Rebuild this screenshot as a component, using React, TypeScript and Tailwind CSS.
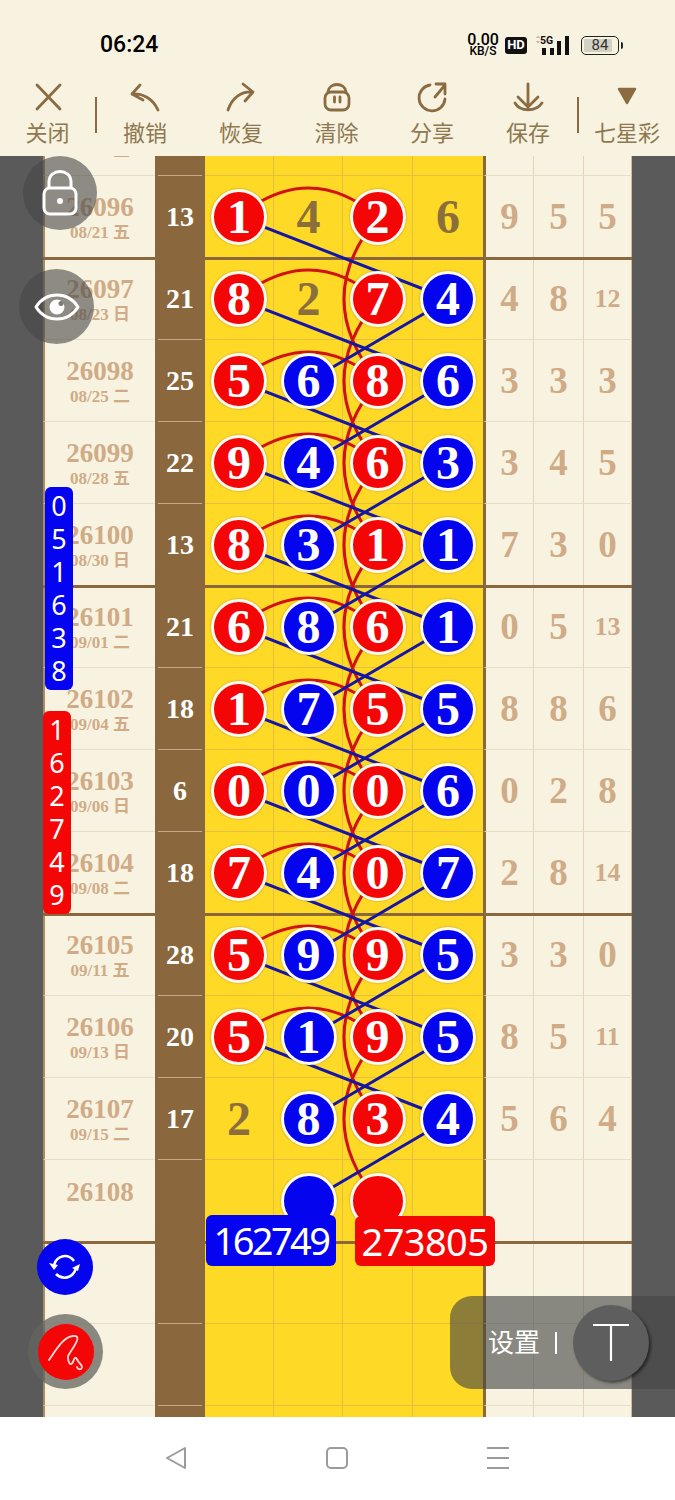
import type { ReactNode } from "react";

const serif = "font-['Liberation_Serif','Noto_Sans_CJK_SC',serif]";
const sans = "font-['Noto_Sans','Noto_Sans_CJK_SC',sans-serif]";

type Ball = { n?: number; c?: "r" | "b" };

interface RowData {
	issue?: string;
	date?: string;
	sum?: number;
	balls?: (Ball | null)[];
	right?: number[];
}

const r = (n?: number): Ball => ({ n, c: "r" });
const b = (n?: number): Ball => ({ n, c: "b" });
const p = (n: number): Ball => ({ n });

const rows: RowData[] = [
	{ issue: "26095", date: "08/19 三" },
	{ issue: "26096", date: "08/21 五", sum: 13, balls: [r(1), p(4), r(2), p(6)], right: [9, 5, 5] },
	{ issue: "26097", date: "08/23 日", sum: 21, balls: [r(8), p(2), r(7), b(4)], right: [4, 8, 12] },
	{ issue: "26098", date: "08/25 二", sum: 25, balls: [r(5), b(6), r(8), b(6)], right: [3, 3, 3] },
	{ issue: "26099", date: "08/28 五", sum: 22, balls: [r(9), b(4), r(6), b(3)], right: [3, 4, 5] },
	{ issue: "26100", date: "08/30 日", sum: 13, balls: [r(8), b(3), r(1), b(1)], right: [7, 3, 0] },
	{ issue: "26101", date: "09/01 二", sum: 21, balls: [r(6), b(8), r(6), b(1)], right: [0, 5, 13] },
	{ issue: "26102", date: "09/04 五", sum: 18, balls: [r(1), b(7), r(5), b(5)], right: [8, 8, 6] },
	{ issue: "26103", date: "09/06 日", sum: 6, balls: [r(0), b(0), r(0), b(6)], right: [0, 2, 8] },
	{ issue: "26104", date: "09/08 二", sum: 18, balls: [r(7), b(4), r(0), b(7)], right: [2, 8, 14] },
	{ issue: "26105", date: "09/11 五", sum: 28, balls: [r(5), b(9), r(9), b(5)], right: [3, 3, 0] },
	{ issue: "26106", date: "09/13 日", sum: 20, balls: [r(5), b(1), r(9), b(5)], right: [8, 5, 11] },
	{ issue: "26107", date: "09/15 二", sum: 17, balls: [p(2), b(8), r(3), b(4)], right: [5, 6, 4] },
	{ issue: "26108", balls: [null, b(), r(), null] },
	{},
	{},
	{},
];

const colX = [238, 309, 378, 449];
const rowY = (i: number) => 61 + 82 * (i - 1);

// 连线：画在表格上面，球在连线上面
const Lines = () => {
	const blue: ReactNode[] = [];
	const red: ReactNode[] = [];
	for (let i = 1; i <= 12; i++) {
		const y = rowY(i);
		const y2 = rowY(i + 1);
		if (i < 12) {
			blue.push(<line key={`a${i}`} x1={colX[0]} y1={y} x2={colX[3]} y2={y2} />);
		}
		if (i > 1) {
			blue.push(<line key={`c${i}`} x1={colX[3]} y1={y} x2={colX[1]} y2={y2} />);
		}
		if (i < 12) {
			red.push(<path key={`d${i}`} d={`M${colX[0]} ${y} Q${colX[1]} ${y - 58} ${colX[2]} ${y}`} />);
			red.push(<path key={`e${i}`} d={`M${colX[2]} ${y} Q310 ${y + 82} ${colX[2]} ${rowY(i + 2)}`} />);
		}
	}
	return (
		<svg className="absolute left-0 top-0 z-10" width={675} height={1261} fill="none" strokeWidth={3}>
			<g stroke="#d21212">{red}</g>
			<g stroke="#1616a6">{blue}</g>
		</svg>
	);
};

const Circle = ({ ball }: { ball: Ball }) => {
	if (!ball.c) {
		return <span className={`${serif} text-[48px] font-bold text-[#8a6f3c]`}>{ball.n}</span>;
	}
	return (
		<div
			className={`relative z-20 flex h-[56px] w-[56px] shrink-0 items-center justify-center rounded-full border-[3px] border-[#fdfbf0] ${
				ball.c === "r" ? "bg-[#f40606]" : "bg-[#0404ee]"
			} ${serif} text-[48px] font-bold text-white shadow-[0_0_2px_rgba(120,90,30,0.6)]`}
		>
			{ball.n}
		</div>
	);
};

const Row = ({ row, index }: { row: RowData; index: number }) => {
	const thick = index % 4 === 1;
	return (
		<div className="relative grid h-[82px] grid-cols-[43px_112px_50px_69px_69px_70px_70px_50px_50px_49px_43px]">
			<div className="bg-[#5a5a5a]" />
			<div
				className={`flex flex-col items-center justify-center border-b border-b-[#e9ddc6] border-l-2 border-l-[#a98c63] pt-[2px] ${serif} text-[#cfab87]`}
			>
				{row.issue && <div className="text-[27px] font-bold leading-[31px]">{row.issue}</div>}
				{row.date && <div className="text-[17px] font-bold leading-[20px]">{row.date}</div>}
				{row.issue && !row.date && <div className="h-[18px]" />}
			</div>
			<div className="flex flex-col bg-[#8a673c]">
				<div className={`flex flex-1 items-center justify-center ${serif} text-[28px] font-bold text-white`}>
					{row.sum}
				</div>
				<div className="mx-[3px] h-px bg-[#c7a987]" />
			</div>
			{[0, 1, 2, 3].map((i) => (
				<div
					key={i}
					className={`flex items-center justify-center border-b border-b-[#e5bf42] bg-[#fed925] ${
						i < 3 ? "border-r border-r-[#e5bf42]" : ""
					} ${i === 1 ? "pl-[1px]" : ""}`}
				>
					{row.balls?.[i] && <Circle ball={row.balls[i]!} />}
				</div>
			))}
			{[0, 1, 2].map((i) => (
				<div
					key={i}
					className={`flex items-center justify-center border-b border-b-[#e9ddc6] ${
						i === 0 ? "border-l-[3px] border-l-[#8a673c]" : "border-l border-l-[#e2d3bb]"
					} ${i === 2 ? "border-r border-r-[#cdbb9b]" : ""} ${serif} font-bold text-[#cfab87] ${
						(row.right?.[i] ?? 0) > 9 ? "text-[26px]" : "text-[37px]"
					}`}
				>
					{row.right?.[i]}
				</div>
			))}
			<div className="bg-[#5a5a5a]" />
			{/* 每四期一条粗线 */}
			{thick && <div className="absolute -bottom-[2px] left-[43px] right-[43px] z-[5] h-[3.5px] bg-[#8a673c]" />}
		</div>
	);
};

const ToolIcon = ({ children }: { children: ReactNode }) => (
	<svg
		width={40}
		height={32}
		viewBox="0 0 40 32"
		fill="none"
		stroke="#8a6b42"
		strokeWidth={2.8}
		strokeLinecap="round"
		strokeLinejoin="round"
	>
		{children}
	</svg>
);

const tools: { label: string; w: string; icon: ReactNode }[] = [
	{ label: "关闭", w: "w-[95px]", icon: <path d="M9 3 L32 27 M32 3 L9 27" /> },
	{
		label: "撤销",
		w: "w-[96px]",
		icon: <path d="M15 3 L7 12 L18 18 M7 12 C18 11 28 17 33 28" />,
	},
	{
		label: "恢复",
		w: "w-[96px]",
		icon: <path d="M22 2 L32 10 L24 19 M32 10 C20 9 11 16 7 28" />,
	},
	{
		label: "清除",
		w: "w-[95px]",
		icon: (
			<>
				<rect x="8" y="10" width="24" height="18" rx="6" />
				<path d="M11 10 C12 0 28 0 29 10 M17.5 15 V20 M23 15 V20" />
			</>
		),
	},
	{
		label: "分享",
		w: "w-[96px]",
		icon: <path d="M18 3 A13 13 0 1 0 33 17 M23 15 L33 3 M24 2 H33 V12" />,
	},
	{
		label: "保存",
		w: "w-[96px]",
		icon: <path d="M20 2 V25 M10 15 L20 25 L30 15 M7 21 C12 30 28 30 34 21" />,
	},
];

const Toolbar = () => (
	<div className="flex h-[78px] items-start bg-[#f8f3e0]">
		{tools.map((t, i) => (
			<div key={t.label} className="flex items-start">
				<div className={`${t.w} flex flex-col items-center pt-[4px]`}>
					<ToolIcon>{t.icon}</ToolIcon>
					<span className={`${sans} mt-[3px] text-[22px] leading-[30px] text-[#8e7850]`}>{t.label}</span>
				</div>
				{i === 0 && <div className="mt-[19px] h-[36px] w-[2px] bg-[#8a6b42]" />}
			</div>
		))}
		<div className="ml-[1px] mt-[19px] h-[36px] w-[2px] bg-[#8a6b42]" />
		<div className="flex flex-1 flex-col items-center pt-[4px]">
			<svg width={24} height={32} viewBox="0 0 24 32">
				<path d="M4 7 H20 L12 21 Z" fill="#8a6b42" stroke="#8a6b42" strokeWidth={2.5} strokeLinejoin="round" />
			</svg>
			<span className={`${sans} mt-[3px] text-[22px] leading-[30px] text-[#8e7850]`}>七星彩</span>
		</div>
	</div>
);

const StatusBar = () => (
	<div className="flex h-[78px] items-center justify-between bg-[#f8f3e0] pl-[100px] pr-[56px] pt-[12px]">
		<span className="font-['Roboto',sans-serif] text-[23px] font-medium text-black">06:24</span>
		<div className="flex items-center text-black">
			<div className="flex w-[34px] flex-col items-center font-['Roboto',sans-serif] font-medium">
				<span className="text-[16px] leading-[13px]">0.00</span>
				<span className="text-[12px] leading-[11px]">KB/S</span>
			</div>
			<span className="ml-[5px] flex h-[17px] w-[22px] items-center justify-center rounded-[3px] bg-[#111] font-['Roboto',sans-serif] text-[13px] font-bold text-white">
				HD
			</span>
			<svg className="ml-[8px]" width={37} height={22} viewBox="0 0 37 22">
				<path d="M1 4 L3 1.5 L5 4 Z M1 7 L3 9.5 L5 7 Z" fill="#bdbaa8" />
				<text x="5" y="10" fontSize="10.5" fontWeight="700" fontFamily="Roboto, sans-serif" fill="#111">
					5G
				</text>
				<rect x="7" y="14" width="4" height="7" fill="#111" />
				<rect x="15" y="14" width="4" height="7" fill="#111" />
				<rect x="22" y="7" width="4" height="14" fill="#111" />
				<rect x="30" y="2" width="4" height="19" fill="#111" />
			</svg>
			<div className="relative ml-[9px] flex h-[19px] w-[38px] items-center justify-center rounded-[5px] border-[1.5px] border-[#222] font-['Roboto',sans-serif] text-[15px] text-[#333]">
				<div className="absolute inset-y-[2px] left-[2px] w-[28px] rounded-[1px] bg-[#d3d2c2]" />
				<span className="relative">84</span>
				<div className="absolute -right-[5px] h-[7px] w-[2px] rounded-r-sm bg-[#222]" />
			</div>
		</div>
	</div>
);

const NumStack = ({ items, cls }: { items: number[]; cls: string }) => (
	<div
		className={`absolute z-30 flex h-[203px] w-[28px] flex-col items-center justify-between rounded-[6px] py-[3px] ${sans} text-[27px] leading-[32px] text-white ${cls}`}
	>
		{items.map((n, i) => (
			<span key={i}>{n}</span>
		))}
	</div>
);

const Overlays = () => (
	<>
		{/* 左边的浮动按钮 */}
		<div className="absolute left-[23px] top-0 z-30 flex h-[74px] w-[74px] items-center justify-center rounded-full bg-[rgba(70,70,70,0.6)]">
			<svg width={38} height={46} viewBox="0 0 38 46" fill="none" stroke="#fff" strokeWidth={3}>
				<rect x="3" y="18" width="32" height="26" rx="6" />
				<path d="M8 18 V12 C8 -2 30 -2 30 12 V18" />
				<circle cx="19" cy="31" r="3" fill="#fff" stroke="none" />
			</svg>
		</div>
		<div className="absolute left-[19px] top-[113px] z-30 flex h-[75px] w-[75px] items-center justify-center rounded-full bg-[rgba(70,70,70,0.6)]">
			<svg width={46} height={30} viewBox="0 0 46 30" fill="none">
				<path d="M2 15 C12 -1 34 -1 44 15 C34 31 12 31 2 15 Z" stroke="#fff" strokeWidth={3} strokeLinejoin="round" />
				<circle cx="23" cy="15" r="7.5" fill="#fff" />
				<circle cx="27" cy="11.5" r="2.5" fill="#7d7b75" />
			</svg>
		</div>
		<NumStack items={[0, 5, 1, 6, 3, 8]} cls="left-[45px] top-[331px] bg-[#0404f0]" />
		<NumStack items={[1, 6, 2, 7, 4, 9]} cls="left-[43px] top-[555px] bg-[#f40606]" />
		<div className="absolute left-[37px] top-[1083px] z-30 flex h-[56px] w-[56px] items-center justify-center rounded-full bg-[#0404ee]">
			<svg width={32} height={26} viewBox="0 0 32 26" fill="none" stroke="#fff" strokeWidth={2.6}>
				<path d="M5 11 C8 1 19 -1 25 7" />
				<path d="M27 14 C24 25 13 26 7 20" />
				<path d="M0 9 L9 11 L5 16 Z" fill="#fff" stroke="none" />
				<path d="M23 14 L31 10 L29 17 Z" fill="#fff" stroke="none" />
			</svg>
		</div>
		<div className="absolute left-[28px] top-[1158px] z-30 flex h-[75px] w-[75px] items-center justify-center rounded-full bg-[rgba(100,100,95,0.75)]">
			<div className="h-[56px] w-[56px] rounded-full bg-[#f40606]">
				<svg width={56} height={56} viewBox="0 0 56 56" fill="none" stroke="#fbdcdc" strokeWidth={1.8} strokeLinecap="round">
					<path d="M11 36 C18 26 25 13 35 12 C45 11 36 22 30 32 C30 40 33 42 35 38 C37 32 38 33 40 37 C42 40 46 43 43 45 C41 46 39 44 39 43" />
				</svg>
			</div>
		</div>

		{/* 本期预测号码 */}
		<div className={`absolute left-[206px] top-[1059px] z-30 flex h-[51px] w-[130px] items-center justify-center rounded-[6px] bg-[#0404f0] ${sans} text-[38px] tracking-[-2.6px] text-white`}>
			162749
		</div>
		<div className={`absolute left-[355px] top-[1060px] z-30 flex h-[50px] w-[140px] items-center justify-center rounded-[6px] bg-[#f40606] ${sans} text-[38px] tracking-[-0.6px] text-white`}>
			273805
		</div>

		{/* 右下的设置面板 */}
		<div className="absolute left-[450px] top-[1140px] z-30 flex h-[93px] w-[225px] items-center rounded-l-[22px] bg-[rgba(70,70,70,0.62)] pl-[38px]">
			<span className={`${sans} text-[26px] text-white`}>设置</span>
			<div className="ml-[15px] h-[22px] w-[2px] bg-white" />
			<div className="ml-[16px] flex h-[76px] w-[76px] items-center justify-center rounded-full bg-[#5e5e5e] shadow-[2px_2px_3px_rgba(0,0,0,0.5)]">
				<svg width={38} height={40} viewBox="0 0 38 40" stroke="#fff" strokeWidth={2.2}>
					<path d="M1 2 H37 M19 2 V38" />
				</svg>
			</div>
		</div>
	</>
);

const NavBar = () => (
	<div className="flex h-[83px] items-start justify-center gap-[137px] bg-white pr-[1px] pt-[29px]">
		<svg width={24} height={24} viewBox="0 0 24 24" fill="none" stroke="#9b9b9b" strokeWidth={2} strokeLinejoin="round">
			<path d="M21 2 V22 L3 12 Z" />
		</svg>
		<svg width={24} height={24} viewBox="0 0 24 24" fill="none" stroke="#9b9b9b" strokeWidth={2}>
			<rect x="2" y="2" width="20" height="20" rx="4" />
		</svg>
		<svg width={24} height={24} viewBox="0 0 24 24" stroke="#9b9b9b" strokeWidth={2}>
			<path d="M1 2 H23 M1 12 H23 M1 22 H23" />
		</svg>
	</div>
);

export default function App() {
	return (
		<div className="flex h-[1500px] w-[675px] flex-col overflow-hidden bg-[#f8f3e0]">
			<StatusBar />
			<Toolbar />
			<div className="relative h-[1261px] overflow-hidden">
				<div className="-mt-[62px]">
					{rows.map((row, i) => (
						<Row key={i} row={row} index={i} />
					))}
				</div>
				<Lines />
				<Overlays />
			</div>
			<NavBar />
		</div>
	);
}
